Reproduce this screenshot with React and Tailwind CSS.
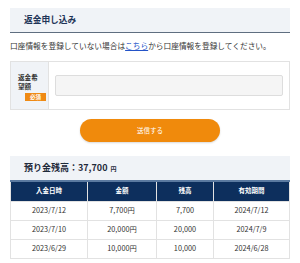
const rows = [
  ["2023/7/12", "7,700円", "7,700", "2024/7/12"],
  ["2023/7/10", "20,000円", "20,000", "2024/7/9"],
  ["2023/6/29", "10,000円", "10,000", "2024/6/28"],
];

const cols = ["入金日時", "金額", "残高", "有効期間"];

export default function App() {
  return (
    <div className="w-[300px] h-[263px] bg-white px-[10px] pt-[8px] text-[#333] font-['Noto_Sans_CJK_JP',sans-serif]">
      <div className="h-[25px] bg-[#f0f3f7] border-b border-[#5f6e80] pl-[14px] flex items-center text-[8.7px] font-bold text-[#1f3558]">
        返金申し込み
      </div>

      <p className="mt-[8px] text-[7.7px] leading-[10px] whitespace-nowrap">
        口座情報を登録していない場合は
        <a className="text-[#2454c8] underline">こちら</a>
        から口座情報を登録してください。
      </p>

      <div className="mt-[10px] h-[49px] border border-[#e2e2e2] flex">
        <div className="w-[38px] shrink-0 bg-[#f0f3f7] border-r border-[#e2e2e2] pl-[7px] pt-[11px] text-[6.6px] leading-[9px] font-bold text-[#333]">
          <div>返金希</div>
          <div>望額</div>
          <div className="pl-[7px] mt-[1px]">
            <span className="inline-block bg-[#ef8a14] text-white text-[5.5px] leading-[8px] px-[5px]">必須</span>
          </div>
        </div>
        <div className="flex-1 flex items-center pl-[6px] pr-[6px]">
          <div className="w-full h-[21px] bg-[#f5f5f5] border border-[#dddddd] rounded-[2px]"></div>
        </div>
      </div>

      <div className="flex justify-center mt-[9px]">
        <button className="w-[140px] h-[23px] rounded-full bg-[#f08a0c] text-white text-[6.5px] shadow-[0_1px_2px_rgba(0,0,0,0.15)]">
          送信する
        </button>
      </div>

      <div className="mt-[14px] h-[24px] bg-[#f0f3f7] pl-[14px] flex items-center text-[9px] font-bold text-[#1f2a3a]">
        預り金残高：37,700
        <span className="ml-[3px] text-[6px]">円</span>
      </div>

      <table className="w-full border-collapse table-fixed text-center">
        <colgroup>
          <col className="w-[77px]" />
          <col className="w-[69px]" />
          <col className="w-[57px]" />
          <col className="w-[76px]" />
        </colgroup>
        <thead>
          <tr className="h-[20px] bg-[#0d2f5d] text-white text-[6.5px] font-bold border-t-2 border-[#5b7aa0]">
            {cols.map((c) => (
              <th key={c} className="border-x border-[#e2e2e2] font-bold">{c}</th>
            ))}
          </tr>
        </thead>
        <tbody>
          {rows.map((r, i) => (
            <tr key={i} className="h-[19px] text-[7.3px]">
              {r.map((v, j) => (
                <td key={j} className="border border-[#e2e2e2]">{v}</td>
              ))}
            </tr>
          ))}
        </tbody>
      </table>
    </div>
  );
}
